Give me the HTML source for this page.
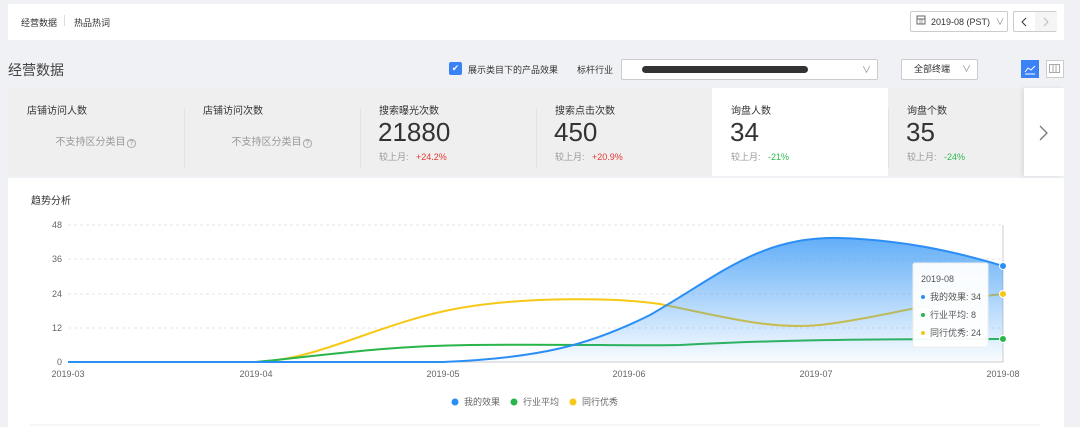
<!DOCTYPE html>
<html><head><meta charset="utf-8"><style>
body{margin:0;width:1080px;height:427px;background:#f0f1f5;font-family:"Liberation Sans","Noto Sans CJK SC",sans-serif;position:relative;overflow:hidden;color:#333}
.a{position:absolute}
.card{position:absolute;top:88px;height:88px;width:176px;background:#efefef}
.ct{position:absolute;left:19px;top:14px;font-size:10px;color:#333}
.num{position:absolute;left:18px;top:29px;font-size:26px;color:#333}
.cmp{position:absolute;left:19px;top:62px;font-size:9px;color:#999}
.ns{position:absolute;left:0;right:0;top:45px;text-align:center;font-size:10px;color:#999}
.sep{position:absolute;left:0;top:20px;width:1px;height:60px;background:#dde3ef}
</style></head><body>
<div class="a" style="left:8px;top:4px;width:1056px;height:36px;background:#fff"></div>
<div class="a" style="left:21px;top:16px;font-size:9px;">经营数据</div>
<div class="a" style="left:64px;top:15px;width:1px;height:11px;background:#ddd"></div>
<div class="a" style="left:74px;top:16px;font-size:9px;">热品热词</div>
<div class="a" style="left:910px;top:11px;width:98px;height:21px;border:1px solid #ccc;border-radius:2px;background:#fff;font-size:9px;line-height:21px;box-sizing:border-box;padding-left:20px">2019-08 (PST) <span style="color:#888;margin-left:3px">∨</span></div>
<svg class="a" style="left:916px;top:15px" width="10" height="10"><rect x="1" y="1" width="8" height="8" fill="none" stroke="#666"/><line x1="1" y1="4" x2="9" y2="4" stroke="#666"/><line x1="4" y1="4" x2="4" y2="9" stroke="#666" stroke-width=".6"/><line x1="6" y1="4" x2="6" y2="9" stroke="#666" stroke-width=".6"/></svg>
<div class="a" style="left:1013px;top:11px;width:44px;height:21px;border:1px solid #ccc;border-radius:2px;background:#fff;box-sizing:border-box"><div class="a" style="left:21px;top:0;width:22px;height:19px;background:#f5f5f5"></div>
<svg class="a" style="left:0;top:0" width="42" height="19"><polyline points="12,6 8,10 12,14" fill="none" stroke="#333"/><polyline points="30,6 34,10 30,14" fill="none" stroke="#bbb"/></svg></div>

<div class="a" style="left:8px;top:60px;font-size:14px;color:#444">经营数据</div>
<div class="a" style="left:449px;top:62px;width:13px;height:13px;border-radius:2px;background:#3b82f6;color:#fff;font-size:9px;text-align:center;line-height:13px">✔</div>
<div class="a" style="left:468px;top:63px;font-size:9px">展示类目下的产品效果</div>
<div class="a" style="left:577px;top:63px;font-size:9px">标杆行业</div>
<div class="a" style="left:621px;top:59px;width:257px;height:21px;border:1px solid #ccc;border-radius:2px;background:#fff;box-sizing:border-box"><div class="a" style="left:20px;top:6px;width:166px;height:7px;border-radius:4px;background:#333"></div><span class="a" style="left:240px;top:3px;font-size:9px;color:#888">∨</span></div>
<div class="a" style="left:901px;top:59px;width:77px;height:21px;border:1px solid #ccc;border-radius:2px;background:#fff;box-sizing:border-box;font-size:9px;line-height:19px;padding-left:12px">全部终端<span class="a" style="left:60px;top:0;color:#888">∨</span></div>
<div class="a" style="left:1021px;top:60px;width:18px;height:18px;background:#3b82f6"></div>
<svg class="a" style="left:1024px;top:63px" width="12" height="12"><polyline points="1,9 4,5 7,7 11,3" fill="none" stroke="#fff"/><line x1="1" y1="11" x2="11" y2="11" stroke="#fff"/></svg>
<div class="a" style="left:1046px;top:60px;width:18px;height:18px;border:1px solid #ccc;box-sizing:border-box;background:#fff"></div>
<svg class="a" style="left:1049px;top:64px" width="11" height="10"><rect x=".5" y=".5" width="10" height="8" fill="none" stroke="#aaa"/><line x1="4" y1="0" x2="4" y2="9" stroke="#aaa"/><line x1="7" y1="0" x2="7" y2="9" stroke="#aaa"/></svg>

<div class="card" style="left:8px"><div class="ct">店铺访问人数</div><div class="ns">不支持区分类目<span style="border:1px solid #aaa;border-radius:50%;font-size:7px;padding:0 2px;margin-left:1px">?</span></div></div>
<div class="card" style="left:184px"><div class="sep"></div><div class="ct">店铺访问次数</div><div class="ns">不支持区分类目<span style="border:1px solid #aaa;border-radius:50%;font-size:7px;padding:0 2px;margin-left:1px">?</span></div></div>
<div class="card" style="left:360px"><div class="sep"></div><div class="ct">搜索曝光次数</div><div class="num">21880</div><div class="cmp">较上月:&nbsp;&nbsp; <span style="color:#e53935">+24.2%</span></div></div>
<div class="card" style="left:536px"><div class="sep"></div><div class="ct">搜索点击次数</div><div class="num">450</div><div class="cmp">较上月:&nbsp;&nbsp; <span style="color:#e53935">+20.9%</span></div></div>
<div class="card" style="left:712px;background:#fff"><div class="ct">询盘人数</div><div class="num">34</div><div class="cmp">较上月:&nbsp;&nbsp; <span style="color:#2db84d">-21%</span></div></div>
<div class="card" style="left:888px;width:136px"><div class="sep"></div><div class="ct">询盘个数</div><div class="num">35</div><div class="cmp">较上月:&nbsp;&nbsp; <span style="color:#2db84d">-24%</span></div></div>
<div class="card" style="left:1024px;width:40px;background:#fff;box-shadow:-2px 0 4px rgba(0,0,0,.08)"><svg class="a" style="left:14px;top:36px" width="12" height="18"><polyline points="2,2 9,9 2,16" fill="none" stroke="#777" stroke-width="1.3"/></svg></div>

<div class="a" style="left:8px;top:178px;width:1056px;height:249px;background:#fff"></div>
<div class="a" style="left:31px;top:192px;font-size:10px">趋势分析</div>
<svg class="a" style="left:0;top:0" width="1080" height="427" font-family="Liberation Sans" font-size="9" fill="#666">
<defs><linearGradient id="g" x1="0" y1="0" x2="0" y2="1"><stop offset="0" stop-color="#3d9bf5" stop-opacity=".95"/><stop offset="1" stop-color="#3d9bf5" stop-opacity=".03"/></linearGradient></defs>
<g stroke="#e6e6e6" stroke-dasharray="3,3"><line x1="68" y1="225" x2="1003" y2="225"/><line x1="68" y1="259" x2="1003" y2="259"/><line x1="68" y1="294" x2="1003" y2="294"/><line x1="68" y1="328" x2="1003" y2="328"/></g>
<line x1="68" y1="362" x2="1003" y2="362" stroke="#ccc"/>
<line x1="1003" y1="225" x2="1003" y2="362" stroke="#ccc"/>
<g text-anchor="end"><text x="62" y="228">48</text><text x="62" y="262">36</text><text x="62" y="297">24</text><text x="62" y="331">12</text><text x="62" y="365">0</text></g>
<g text-anchor="middle"><text x="68" y="377">2019-03</text><text x="256" y="377">2019-04</text><text x="443" y="377">2019-05</text><text x="629" y="377">2019-06</text><text x="816" y="377">2019-07</text><text x="1003" y="377">2019-08</text></g>
<path d="M68,362 L256,362 C320,360 380,322 460,308 C530,296 620,298 660,304 C720,316 770,330 820,325 C880,318 940,300 1003,294" fill="none" stroke="#f7c815" stroke-width="2"/>
<path d="M68,362 L256,362 C320,356 380,346 470,345 C560,344 640,346 680,345 C740,342 800,339 1003,339" fill="none" stroke="#2ab54a" stroke-width="2"/>
<path d="M443,362 C540,358 590,345 650,315 C720,275 760,236 840,238 C900,240 950,250 1003,266 L1003,362 Z" fill="url(#g)" opacity=".85"/>
<path d="M68,362 L443,362 C540,358 590,345 650,315 C720,275 760,236 840,238 C900,240 950,250 1003,266" fill="none" stroke="#2b8ef5" stroke-width="2"/>
<circle cx="1003" cy="266" r="3.5" fill="#2b8ef5" stroke="#fff"/><circle cx="1003" cy="294" r="3.5" fill="#f7c815" stroke="#fff"/><circle cx="1003" cy="339" r="3.5" fill="#2ab54a" stroke="#fff"/>
<rect x="913" y="263" width="75" height="84" rx="2" fill="#fff" fill-opacity=".95" stroke="#eee"/>
<g font-family="Liberation Sans,Noto Sans CJK SC" fill="#555" font-size="9"><text x="921" y="282">2019-08</text><text x="930" y="300">我的效果: 34</text><text x="930" y="318">行业平均: 8</text><text x="930" y="336">同行优秀: 24</text></g>
<circle cx="923" cy="297" r="2" fill="#2b8ef5"/><circle cx="923" cy="315" r="2" fill="#2ab54a"/><circle cx="923" cy="333" r="2" fill="#f7c815"/>
<g font-family="Liberation Sans,Noto Sans CJK SC" font-size="9" fill="#666"><circle cx="455" cy="402" r="3.5" fill="#2b8ef5"/><text x="464" y="405">我的效果</text><circle cx="514" cy="402" r="3.5" fill="#2ab54a"/><text x="523" y="405">行业平均</text><circle cx="573" cy="402" r="3.5" fill="#f7c815"/><text x="582" y="405">同行优秀</text></g>
<line x1="30" y1="425" x2="1040" y2="425" stroke="#eee"/>
</svg>
</body></html>
